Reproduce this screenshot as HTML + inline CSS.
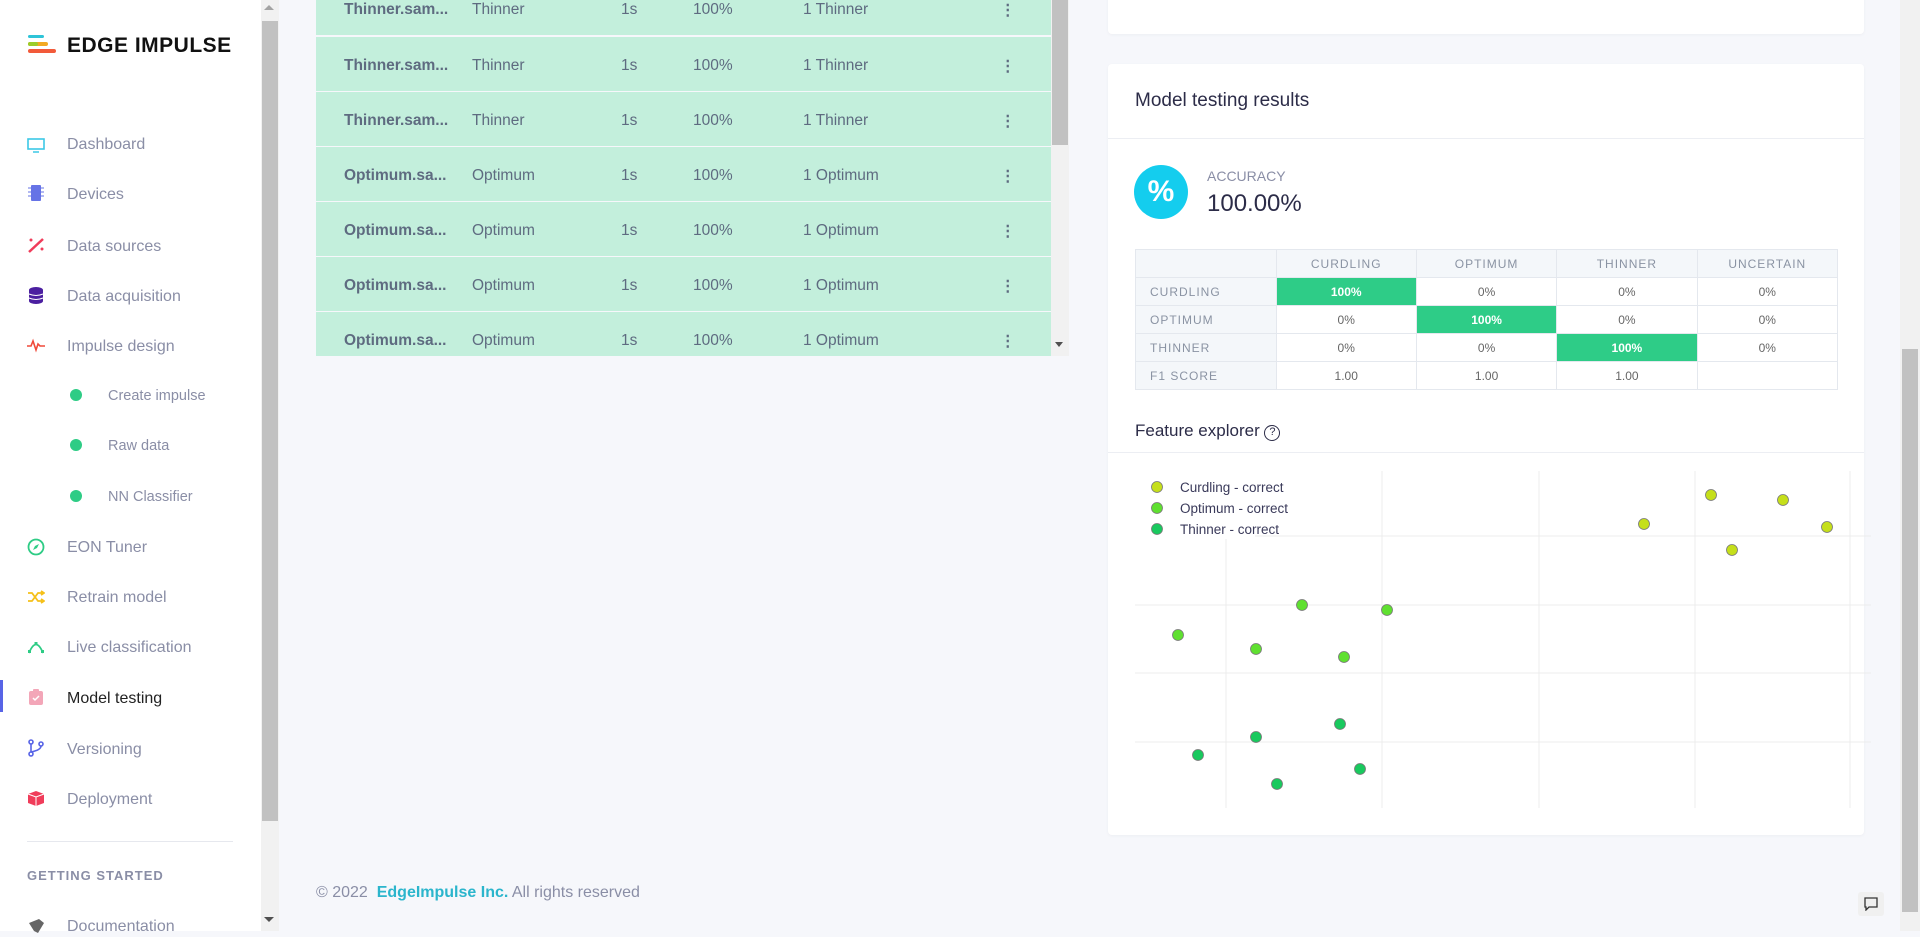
<!DOCTYPE html>
<html><head><meta charset="utf-8"><style>
*{box-sizing:border-box;margin:0;padding:0}
body{width:1920px;height:931px;overflow:hidden;background:#f6f7fb;font-family:"Liberation Sans",sans-serif;position:relative}
.abs{position:absolute}
#side{left:0;top:0;width:261px;height:931px;background:#fff}
.nav{position:absolute;left:67px;font-size:16px;color:#8a8ea6;line-height:20px;margin-top:3px}
.ic{position:absolute;left:27px;width:18px;height:18px;margin-top:1px}
.dot{position:absolute;left:70px;width:12px;height:12px;border-radius:6px;background:#2ecc85}
.sub{position:absolute;left:108px;font-size:14.5px;color:#8a8ea6;line-height:20px;margin-top:2px}
.row{position:absolute;left:316px;width:735px;height:54px;background:#c3efdc;font-size:15.5px;color:#5e6b80}
.row span{position:absolute;top:20px}
.card{position:absolute;background:#fff;border-radius:4px;box-shadow:0 1px 3px rgba(0,0,0,.04)}
table{border-collapse:collapse;position:absolute;left:1135px;top:249px;width:703px;font-size:12px;color:#666}
td{border:1px solid #e4e8ee;height:28px;text-align:center;width:141px}
td.h{background:#f4f7fa;color:#8a93a3;letter-spacing:1px;font-size:12px}
td.l{text-align:left;padding-left:14px;background:#f4f7fa;color:#8a93a3;letter-spacing:1px;font-size:12px}
td.g{background:#2ecc87;color:#fff;font-weight:bold}
</style></head><body>
<div id="side" class="abs">
 <svg class="abs" style="left:27px;top:34px" width="36" height="22"><rect x="1" y="1" width="16" height="3" rx="1.5" fill="#2ec4d8"/><rect x="1" y="8" width="20" height="4" rx="2" fill="#f2a922"/><rect x="1" y="8" width="10" height="4" rx="2" fill="#9bcc2a"/><rect x="1" y="15" width="28" height="4" rx="2" fill="#f25a3a"/></svg>
 <div class="abs" style="left:67px;top:34px;font-size:21px;font-weight:bold;color:#111;letter-spacing:0.5px">EDGE IMPULSE</div>
 <svg class="ic" style="top:135px"><rect x="1" y="3" width="16" height="10" fill="none" stroke="#3cc8e6" stroke-width="1.6"/><line x1="6" y1="16" x2="12" y2="16" stroke="#3cc8e6" stroke-width="1.5"/></svg><div class="nav" style="top:132px">Dashboard</div>
 <svg class="ic" style="top:183px"><rect x="4" y="1" width="10" height="16" rx="1" fill="#6673e6"/><path d="M1 4h3M1 8h3M1 12h3M14 4h3M14 8h3M14 12h3" stroke="#6673e6"/></svg><div class="nav" style="top:182px">Devices</div>
 <svg class="ic" style="top:235px"><path d="M2 16L16 3" stroke="#f03c5a" stroke-width="2.5"/><circle cx="4" cy="4" r="1.5" fill="#f03c5a"/><circle cx="15" cy="13" r="1.5" fill="#f03c5a"/></svg><div class="nav" style="top:234px">Data sources</div>
 <svg class="ic" style="top:285px"><ellipse cx="9" cy="4" rx="7" ry="3" fill="#4b1fa0"/><rect x="2" y="4" width="14" height="11" fill="#4b1fa0"/><ellipse cx="9" cy="15" rx="7" ry="3" fill="#4b1fa0"/><path d="M2 8q7 3 14 0M2 12q7 3 14 0" stroke="#fff" fill="none"/></svg><div class="nav" style="top:284px">Data acquisition</div>
 <svg class="ic" style="top:335px"><path d="M0 10h4l2-5 3 9 2-6 2 2h5" stroke="#f04a3a" stroke-width="1.6" fill="none"/></svg><div class="nav" style="top:334px">Impulse design</div>
 <div class="dot" style="top:389px"></div><div class="sub" style="top:384px">Create impulse</div>
 <div class="dot" style="top:439px"></div><div class="sub" style="top:434px">Raw data</div>
 <div class="dot" style="top:490px"></div><div class="sub" style="top:485px">NN Classifier</div>
 <svg class="ic" style="top:537px"><circle cx="9" cy="9" r="7.5" stroke="#2ecc85" stroke-width="1.8" fill="none"/><path d="M12 6l-2 4-4 2 2-4z" fill="#2ecc85"/></svg><div class="nav" style="top:535px">EON Tuner</div>
 <svg class="ic" style="top:587px"><path d="M1 5h4l6 8h5M1 13h4l6-8h5M14 3l3 2-3 2M14 11l3 2-3 2" stroke="#f5c01a" stroke-width="1.8" fill="none"/></svg><div class="nav" style="top:585px">Retrain model</div>
 <svg class="ic" style="top:637px"><path d="M2 15Q9 -2 16 15" stroke="#2ecc85" stroke-width="1.8" fill="none"/><rect x="1" y="12" width="3" height="3" fill="#2ecc85"/><rect x="14" y="12" width="3" height="3" fill="#2ecc85"/><rect x="7.5" y="4" width="3" height="3" fill="#2ecc85"/></svg><div class="nav" style="top:635px">Live classification</div>
 <div class="abs" style="left:0;top:680px;width:3px;height:32px;background:#5864e6"></div>
 <svg class="ic" style="top:687px"><rect x="2" y="3" width="14" height="14" rx="2" fill="#f3a6b8"/><rect x="6" y="1" width="6" height="4" rx="1" fill="#f3a6b8"/><path d="M6 10l2 2 4-4" stroke="#fff" stroke-width="1.5" fill="none"/></svg><div class="nav" style="top:686px;color:#222">Model testing</div>
 <svg class="ic" style="top:738px"><circle cx="4" cy="3" r="2" stroke="#5864e6" stroke-width="1.6" fill="none"/><circle cx="4" cy="15" r="2" stroke="#5864e6" stroke-width="1.6" fill="none"/><circle cx="14" cy="5" r="2" stroke="#5864e6" stroke-width="1.6" fill="none"/><path d="M4 5v8M14 7q0 4-10 6" stroke="#5864e6" stroke-width="1.6" fill="none"/></svg><div class="nav" style="top:737px">Versioning</div>
 <svg class="ic" style="top:788px"><path d="M9 2l8 3v9l-8 3-8-3V5z" fill="#f03c5a"/><path d="M1 5l8 3 8-3M9 8v9" stroke="#fff" fill="none"/></svg><div class="nav" style="top:787px">Deployment</div>
 <div class="abs" style="left:27px;top:841px;width:206px;height:1px;background:#e6e8ee"></div>
 <div class="abs" style="left:27px;top:868px;font-size:13px;color:#8a8ea6;letter-spacing:1px;font-weight:bold">GETTING STARTED</div>
 <svg class="ic" style="top:916px"><path d="M2 6l10-4 5 4-6 10-4-2z" fill="#666"/></svg><div class="nav" style="top:914px">Documentation</div>
</div>
<div class="abs" style="left:261px;top:0;width:18px;height:931px;background:#f1f1f1"></div>
<div class="abs" style="left:262px;top:21px;width:16px;height:800px;background:#c1c1c1"></div>
<div class="abs" style="left:264px;top:5px;width:0;height:0;border-left:5px solid transparent;border-right:5px solid transparent;border-bottom:5px solid #a3a3a3"></div>
<div class="abs" style="left:264px;top:917px;width:0;height:0;border-left:5px solid transparent;border-right:5px solid transparent;border-top:5px solid #505050"></div>

<div class="row" style="top:-19px"><span style="left:28px;font-weight:bold">Thinner.sam...</span><span style="left:156px">Thinner</span><span style="left:305px">1s</span><span style="left:377px">100%</span><span style="left:487px">1 Thinner</span><span style="left:684px;font-weight:bold">⋮</span></div>
<div class="row" style="top:37px"><span style="left:28px;font-weight:bold">Thinner.sam...</span><span style="left:156px">Thinner</span><span style="left:305px">1s</span><span style="left:377px">100%</span><span style="left:487px">1 Thinner</span><span style="left:684px;font-weight:bold">⋮</span></div>
<div class="row" style="top:92px"><span style="left:28px;font-weight:bold">Thinner.sam...</span><span style="left:156px">Thinner</span><span style="left:305px">1s</span><span style="left:377px">100%</span><span style="left:487px">1 Thinner</span><span style="left:684px;font-weight:bold">⋮</span></div>
<div class="row" style="top:147px"><span style="left:28px;font-weight:bold">Optimum.sa...</span><span style="left:156px">Optimum</span><span style="left:305px">1s</span><span style="left:377px">100%</span><span style="left:487px">1 Optimum</span><span style="left:684px;font-weight:bold">⋮</span></div>
<div class="row" style="top:202px"><span style="left:28px;font-weight:bold">Optimum.sa...</span><span style="left:156px">Optimum</span><span style="left:305px">1s</span><span style="left:377px">100%</span><span style="left:487px">1 Optimum</span><span style="left:684px;font-weight:bold">⋮</span></div>
<div class="row" style="top:257px"><span style="left:28px;font-weight:bold">Optimum.sa...</span><span style="left:156px">Optimum</span><span style="left:305px">1s</span><span style="left:377px">100%</span><span style="left:487px">1 Optimum</span><span style="left:684px;font-weight:bold">⋮</span></div>
<div class="row" style="top:312px;height:44px"><span style="left:28px;font-weight:bold">Optimum.sa...</span><span style="left:156px">Optimum</span><span style="left:305px">1s</span><span style="left:377px">100%</span><span style="left:487px">1 Optimum</span><span style="left:684px;font-weight:bold">⋮</span></div>
<div class="abs" style="left:1051px;top:0;width:18px;height:356px;background:#f1f1f1"></div>
<div class="abs" style="left:1052px;top:0;width:16px;height:145px;background:#c1c1c1"></div>
<div class="abs" style="left:1055px;top:342px;width:0;height:0;border-left:4px solid transparent;border-right:4px solid transparent;border-top:5px solid #505050"></div>

<div class="card" style="left:1108px;top:-10px;width:756px;height:44px"></div>
<div class="card" style="left:1108px;top:64px;width:756px;height:771px"></div>
<div class="abs" style="left:1135px;top:90px;font-size:19px;color:#2c2c48">Model testing results</div>
<div class="abs" style="left:1108px;top:138px;width:756px;height:1px;background:#eceef3"></div>
<div class="abs" style="left:1134px;top:165px;width:54px;height:54px;border-radius:27px;background:#14cdee;color:#fff;font-size:30px;font-weight:bold;text-align:center;line-height:54px">%</div>
<div class="abs" style="left:1207px;top:168px;font-size:14px;color:#8a8ea6">ACCURACY</div>
<div class="abs" style="left:1207px;top:190px;font-size:24px;color:#2c2c48">100.00%</div>
<table>
<tr><td class="h"></td><td class="h">CURDLING</td><td class="h">OPTIMUM</td><td class="h">THINNER</td><td class="h">UNCERTAIN</td></tr>
<tr><td class="l">CURDLING</td><td class="g">100%</td><td>0%</td><td>0%</td><td>0%</td></tr>
<tr><td class="l">OPTIMUM</td><td>0%</td><td class="g">100%</td><td>0%</td><td>0%</td></tr>
<tr><td class="l">THINNER</td><td>0%</td><td>0%</td><td class="g">100%</td><td>0%</td></tr>
<tr><td class="l">F1 SCORE</td><td>1.00</td><td>1.00</td><td>1.00</td><td></td></tr>
</table>
<div class="abs" style="left:1135px;top:421px;font-size:17px;color:#2c2c48">Feature explorer <span style="display:inline-block;width:16px;height:16px;border:1.5px solid #2c2c48;border-radius:8px;font-size:11px;text-align:center;line-height:13px;vertical-align:1px">?</span></div>
<div class="abs" style="left:1108px;top:452px;width:756px;height:1px;background:#eceef3"></div>
<svg class="abs" style="left:1135px;top:471px" width="736" height="337">
<g stroke="#ececec" stroke-width="1">
<line x1="91" y1="0" x2="91" y2="337"/><line x1="247" y1="0" x2="247" y2="337"/><line x1="404" y1="0" x2="404" y2="337"/><line x1="560" y1="0" x2="560" y2="337"/><line x1="715" y1="0" x2="715" y2="337"/>
<line x1="0" y1="65" x2="736" y2="65"/><line x1="0" y1="134" x2="736" y2="134"/><line x1="0" y1="202" x2="736" y2="202"/><line x1="0" y1="271" x2="736" y2="271"/>
</g>
<rect x="0" y="0" width="120" height="68" fill="#fff"/>
<g stroke="#777" stroke-width="0.8">
<circle cx="22" cy="16" r="5.5" fill="#c5df1a"/><circle cx="22" cy="37" r="5.5" fill="#5fe030"/><circle cx="22" cy="58" r="5.5" fill="#19c95e"/>
<circle cx="509" cy="53" r="5.5" fill="#c5df1a"/><circle cx="576" cy="24" r="5.5" fill="#c5df1a"/><circle cx="648" cy="29" r="5.5" fill="#c5df1a"/><circle cx="692" cy="56" r="5.5" fill="#c5df1a"/><circle cx="597" cy="79" r="5.5" fill="#c5df1a"/>
<circle cx="167" cy="134" r="5.5" fill="#5fe030"/><circle cx="252" cy="139" r="5.5" fill="#5fe030"/><circle cx="43" cy="164" r="5.5" fill="#5fe030"/><circle cx="121" cy="178" r="5.5" fill="#5fe030"/><circle cx="209" cy="186" r="5.5" fill="#5fe030"/>
<circle cx="205" cy="253" r="5.5" fill="#19c95e"/><circle cx="121" cy="266" r="5.5" fill="#19c95e"/><circle cx="63" cy="284" r="5.5" fill="#19c95e"/><circle cx="225" cy="298" r="5.5" fill="#19c95e"/><circle cx="142" cy="313" r="5.5" fill="#19c95e"/>
</g>
<g font-family="Liberation Sans, sans-serif" font-size="13.5" fill="#3a3a5a">
<text x="45" y="21">Curdling - correct</text><text x="45" y="42">Optimum - correct</text><text x="45" y="63">Thinner - correct</text>
</g>
</svg>
<div class="abs" style="left:316px;top:884px;font-size:16px;color:#8a8ea6">© 2022 &nbsp;<span style="color:#2bb5cc;font-weight:bold">EdgeImpulse Inc.</span> All rights reserved</div>
<div class="abs" style="left:1900px;top:0;width:20px;height:931px;background:#f1f1f1"></div>
<div class="abs" style="left:1902px;top:349px;width:16px;height:563px;background:#c1c1c1"></div>
<div class="abs" style="left:1858px;top:892px;width:26px;height:24px;background:#f0f0f0;border-radius:3px"></div>
<svg class="abs" style="left:1864px;top:897px" width="14" height="14"><path d="M1 1h12v9H5l-3 3v-3H1z" stroke="#333" fill="none" stroke-width="1.3"/></svg>
</body></html>
